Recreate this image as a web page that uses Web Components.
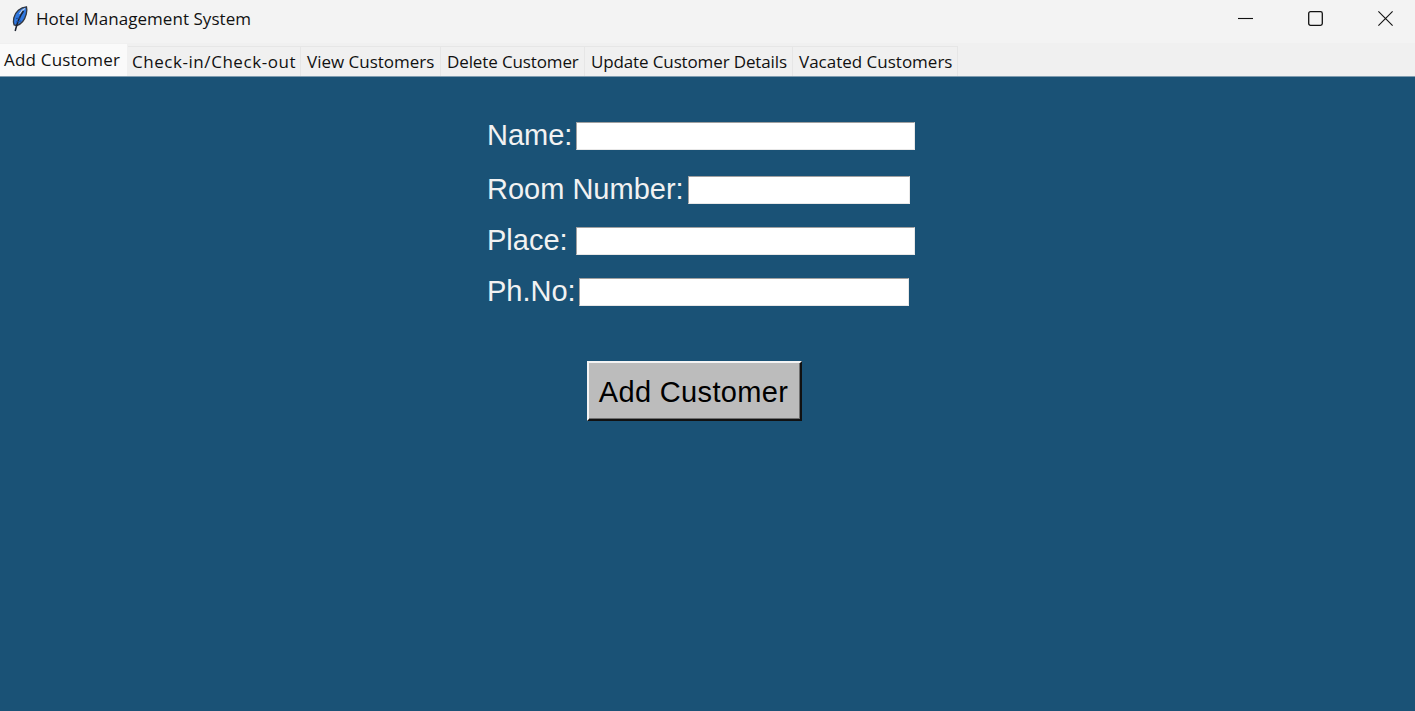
<!DOCTYPE html>
<html>
<head>
<meta charset="utf-8">
<title>Hotel Management System</title>
<style>
    html, body { margin: 0; height: 100%; }
    body { display: flex; flex-direction: column; height: 711px; overflow: hidden; background: #1a5276; }
</style>
</head>
<body>
<title-bar>Hotel Management System</title-bar>
<tab-bar>
    <tab-item active style="--w:128px;--ls:.2px">Add Customer</tab-item>
    <tab-item style="--w:173px;--ls:.55px;--pad:4px">Check-in/Check-out</tab-item>
    <tab-item style="--w:140px;--pad:6px">View Customers</tab-item>
    <tab-item style="--w:144px;--pad:6px;--ls:-.12px">Delete Customer</tab-item>
    <tab-item style="--w:208px;--pad:6px;--ls:-.13px">Update Customer Details</tab-item>
    <tab-item style="--w:165px;--pad:6px">Vacated Customers</tab-item>
</tab-bar>
<customer-form>
    <form-row style="--label:89px;--input:339px;--after:26px">Name:</form-row>
    <form-row style="--label:201px;--input:222px;--after:23px">Room Number:</form-row>
    <form-row style="--label:89px;--input:339px;--after:23px">Place:</form-row>
    <form-row style="--label:92px;--input:330px;--after:55px">Ph.No:</form-row>
    <push-button>Add Customer</push-button>
</customer-form>

<script>
class TitleBar extends HTMLElement {
    constructor(){
        super();
        this.attachShadow({mode: 'open'});
    }

    connectedCallback(){
        this.shadowRoot.innerHTML = `
            <style>
                :host {
                    display: flex;
                    align-items: center;
                    flex: none;
                    height: 43px;
                    background: #f3f3f3;
                    color: #111;
                    font: 17px "Open Sans", "Noto Sans", sans-serif;
                    letter-spacing: .05px;
                }
                .feather { width: 16px; height: 26px; margin: -6px 8px 0 12px; flex: none; }
                .name { flex: 1; margin-top: -6px; }
                .ctl { width: 70px; height: 36px; margin-top: -6px; display: flex; align-items: center; justify-content: center; }
                .ctl:last-child { width: 60px; margin-left: 5px; }
                svg.ic { width: 15px; height: 15px; }
            </style>
            <svg class="feather" viewBox="0 0 16 26">
                <path d="M14.500 .8C8.500 1.200 3 6 1.800 12c-.6 2.800-.3 5.500.3 7l2.700.6C9.500 18 13 13 14.300 8c.6-2.500.8-5 .2-7.200z" fill="#2f78e0" stroke="#33373f" stroke-width="1.300"/>
                <path d="M13 2.500C10.500 3.500 8.500 6 7.500 8" fill="none" stroke="#c9d3e0" stroke-width="1.200"/>
                <path d="M11.500 5C8.500 9 5.500 15 3.200 25" fill="none" stroke="#1c2230" stroke-width="1.500"/>
                <path d="M4 12.500l4.500-.5M4 16l5-1" stroke="#1a4a9c" stroke-width="1"/>
            </svg>
            <span class="name"><slot></slot></span>
            <span class="ctl"><svg class="ic" viewBox="0 0 15 15"><path d="M0 7.500h15" stroke="#111" stroke-width="1.100"/></svg></span>
            <span class="ctl"><svg class="ic" viewBox="0 0 15 15"><rect x=".7" y=".7" width="13.600" height="13.600" rx="1.800" fill="none" stroke="#111" stroke-width="1.300"/></svg></span>
            <span class="ctl"><svg class="ic" viewBox="0 0 15 15"><path d="M.4 .4l14.200 14.200M14.600 .4L.4 14.600" stroke="#111" stroke-width="1.100"/></svg></span>
        `;
    }
}

class TabBar extends HTMLElement {
    constructor(){
        super();
        this.attachShadow({mode: 'open'});
        this.shadowRoot.innerHTML = `
            <style>
                :host {
                    display: flex;
                    align-items: flex-end;
                    flex: none;
                    height: 33px;
                    background: #f0f0f0;
                    border-bottom: 1px solid #7f9cb0;
                }
            </style>
            <slot></slot>
        `;
    }
}

class TabItem extends HTMLElement {
    constructor(){
        super();
        this.attachShadow({mode: 'open'});
        this.shadowRoot.innerHTML = `
            <style>
                :host {
                    display: block;
                    box-sizing: border-box;
                    width: var(--w);
                    height: 30px;
                    padding: 3px 0 0 var(--pad, 5px);
                    background: #f0f0f0;
                    border-right: 1px solid #e6e6e6;
                    border-top: 1px solid #e6e6e6;
                    color: #111;
                    font: 17px/24px "Open Sans", "Noto Sans", sans-serif;
                    letter-spacing: var(--ls, 0);
                    white-space: nowrap;
                }
                :host([active]) {
                    height: 33px;
                    padding: 4px 0 0 4px;
                    background: #fafafa;
                    border-color: #f0f0f0;
                }
            </style>
            <slot></slot>
        `;
    }
}

class CustomerForm extends HTMLElement {
    constructor(){
        super();
        this.attachShadow({mode: 'open'});
        this.shadowRoot.innerHTML = `
            <style>
                :host {
                    display: flex;
                    flex-direction: column;
                    align-items: flex-start;
                    flex: 1;
                    padding: 45px 0 0 487px;
                    background: #1a5276;
                }
            </style>
            <slot></slot>
        `;
    }
}

class FormRow extends HTMLElement {
    constructor(){
        super();
        this.attachShadow({mode: 'open'});
        this.shadowRoot.innerHTML = `
            <style>
                :host {
                    display: flex;
                    align-items: center;
                    height: 28px;
                    margin-bottom: var(--after);
                    color: #f2f2f2;
                    font: 29px "Liberation Sans", Arial, sans-serif;
                }
                .label { width: var(--label); white-space: nowrap; margin-top: -2px; }
                input {
                    box-sizing: border-box;
                    width: var(--input);
                    height: 28px;
                    padding: 0;
                    border: 1px solid;
                    border-color: #a0a0a0 #e8e8e8 #e8e8e8 #a0a0a0;
                    background: #fff;
                    outline: none;
                }
            </style>
            <span class="label"><slot></slot></span>
            <input type="text">
        `;
    }
}

class PushButton extends HTMLElement {
    constructor(){
        super();
        this.attachShadow({mode: 'open'});
        this.shadowRoot.innerHTML = `
            <style>
                :host {
                    display: block;
                    margin-left: 100px;
                }
                button {
                    box-sizing: border-box;
                    display: block;
                    width: 215px;
                    height: 60px;
                    padding: 2px 2px 0 0;
                    background: #bcbcbc;
                    color: #000;
                    border: 2px solid;
                    border-color: #f4f4f4 #111 #111 #f4f4f4;
                    box-shadow: inset -1px -1px 0 #6f6f6f;
                    font: 29px "Liberation Sans", Arial, sans-serif;
                    letter-spacing: .35px;
                }
            </style>
            <button><slot></slot></button>
        `;
    }
}

customElements.define('title-bar', TitleBar);
customElements.define('tab-bar', TabBar);
customElements.define('tab-item', TabItem);
customElements.define('customer-form', CustomerForm);
customElements.define('form-row', FormRow);
customElements.define('push-button', PushButton);
</script>
</body>
</html>
